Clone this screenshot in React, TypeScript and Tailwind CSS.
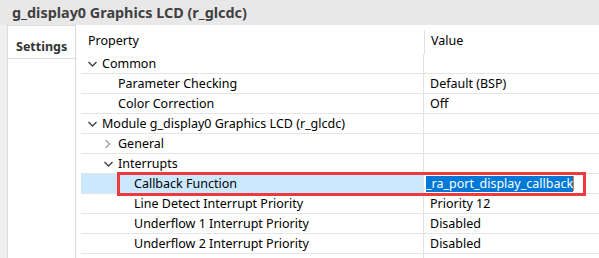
const font = { fontFamily: '"Noto Sans", "Open Sans", sans-serif' };

type Row = {
  label: string;
  value?: string;
  level: number;
  chevron?: "open" | "closed";
  selected?: boolean;
};

const rows: Row[] = [
  { label: "Common", level: 0, chevron: "open" },
  { label: "Parameter Checking", value: "Default (BSP)", level: 1 },
  { label: "Color Correction", value: "Off", level: 1 },
  { label: "Module g_display0 Graphics LCD (r_glcdc)", level: 0, chevron: "open" },
  { label: "General", level: 1, chevron: "closed" },
  { label: "Interrupts", level: 1, chevron: "open" },
  { label: "Callback Function", value: "_ra_port_display_callback", level: 2, selected: true },
  { label: "Line Detect Interrupt Priority", value: "Priority 12", level: 2 },
  { label: "Underflow 1 Interrupt Priority", value: "Disabled", level: 2 },
  { label: "Underflow 2 Interrupt Priority", value: "Disabled", level: 2 },
  { label: "", level: 0 },
];

function Chevron({ kind }: { kind?: "open" | "closed" }) {
  if (kind === "open")
    return (
      <svg width="16" height="20" viewBox="0 0 16 20">
        <path d="M2.5 8l4 4 4-4" fill="none" stroke="#404040" strokeWidth="1.4" />
      </svg>
    );
  if (kind === "closed")
    return (
      <svg width="16" height="20" viewBox="0 0 16 20">
        <path d="M3.5 6l4 4-4 4" fill="none" stroke="#a0a0a0" strokeWidth="1.4" />
      </svg>
    );
  return <span className="w-[16px] shrink-0" />;
}

export default function App() {
  return (
    <div className="relative w-[599px] h-[258px] overflow-hidden bg-white flex flex-col" style={font}>
      <div className="h-[25px] shrink-0 bg-[#e8e8e8] pl-[12px] flex items-center text-[14.4px] font-bold text-[#404040]">
        g_display0 Graphics LCD (r_glcdc)
      </div>
      <div className="flex flex-1">
        <div className="w-[8px] bg-[#f0f0f0] border-r border-[#dcdcdc]" />
        <div className="w-[68px] border-r border-[#d9d9d9] flex flex-col">
          <div className="h-[34px] border-t border-b border-[#dcdcdc] pl-[8px] pt-[13px] text-[12.5px] leading-[16px] font-bold text-[#333]">
            Settings
          </div>
        </div>
        <div className="flex-1 pl-[5px] text-[12.5px] text-black">
          <div className="h-[29px] flex">
            <div className="w-[343px] pl-[7px] pt-[8px] leading-[16px]">Property</div>
            <div className="mt-[5px] w-px bg-[#e0e0e0]" />
            <div className="flex-1 pl-[6px] pt-[8px] leading-[16px]">Value</div>
          </div>
          {rows.map((r, i) => (
            <div key={i} className="h-[20px] flex border-b border-[#e5e5e5]">
              <div
                className={`w-[343px] flex items-center border-r border-[#e0e0e0] ${r.selected ? "bg-[#cce8ff]" : ""}`}
                style={{ paddingLeft: 5 + r.level * 16 }}
              >
                <Chevron kind={r.chevron} />
                <span className="whitespace-nowrap leading-[16px]">{r.label}</span>
              </div>
              <div className="flex-1 flex items-center whitespace-nowrap">
                {r.selected ? (
                  <span className="ml-[2px] flex items-center">
                    <span className="bg-[#0078d7] text-white leading-[16px]">{r.value}</span>
                    <span className="w-px h-[15px] bg-[#d9822b]" />
                  </span>
                ) : (
                  <span className="pl-[6px] leading-[16px]">{r.value}</span>
                )}
              </div>
            </div>
          ))}
        </div>
      </div>
      <div className="absolute left-[117px] top-[172px] w-[469px] h-[24px] border-[3px] border-[#ee3a3d]" />
    </div>
  );
}
